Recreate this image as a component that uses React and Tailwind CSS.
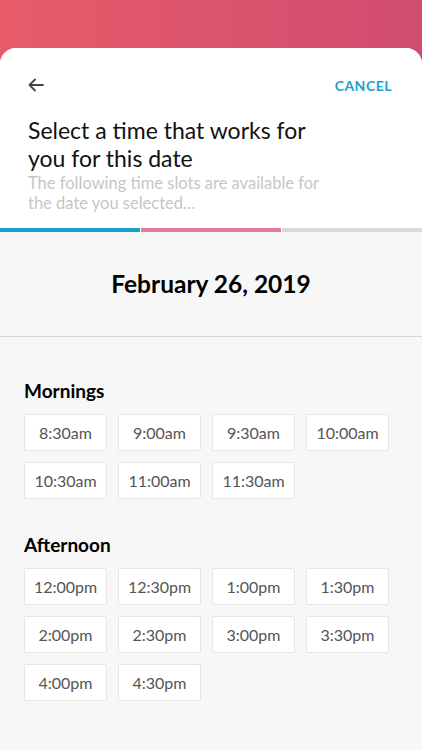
import React from "react";

const mornings = ["8:30am", "9:00am", "9:30am", "10:00am", "10:30am", "11:00am", "11:30am"];
const afternoon = ["12:00pm", "12:30pm", "1:00pm", "1:30pm", "2:00pm", "2:30pm", "3:00pm", "3:30pm", "4:00pm", "4:30pm"];

const SlotGroup = ({ title, slots, className }) => (
  <div className={className}>
    <h3 className="text-[19px] leading-[24px] font-bold text-black">{title}</h3>
    <div className="mt-[11px] grid grid-cols-[repeat(4,83px)] gap-x-[11px] gap-y-[11px]">
      {slots.map((s) => (
        <button
          key={s}
          className="h-[37px] bg-white border border-[#e6e6e6] rounded-[2px] text-[16px] text-[#555] flex items-center justify-center"
        >
          {s}
        </button>
      ))}
    </div>
  </div>
);

const App = () => {
  return (
    <div
      className="w-[422px] h-[750px] overflow-hidden bg-gradient-to-r from-[#e85c69] to-[#d04c70]"
      style={{ fontFamily: "Lato, 'Noto Sans', sans-serif" }}
    >
      <div className="mt-[48px] h-[702px] bg-[#f7f7f7] rounded-t-[16px] overflow-hidden">
        <div className="bg-white">
          <div className="pt-[26px] pl-[28px] pr-[30px] flex items-center justify-between h-[48px]">
            <svg width="16" height="14" viewBox="0 0 16 14" fill="none" stroke="#444" strokeWidth="1.8" strokeLinecap="round" strokeLinejoin="round">
              <path d="M15 7H1.5M7 1.5L1.5 7L7 12.5" />
            </svg>
            <span className="text-[14px] font-bold tracking-[0.5px] text-[#1a9fd2]">CANCEL</span>
          </div>
          <h1 className="mt-[20px] pl-[28px] pr-[90px] text-[23px] leading-[28px] text-[#111]">
            Select a time that works for you for this date
          </h1>
          <p className="mt-[1px] pl-[28px] pr-[92px] text-[16.5px] leading-[20px] text-[#c6c6c6]">
            The following time slots are available for the date you selected…
          </p>
          <div className="mt-[15px] flex gap-[1px] h-[4px]">
            <div className="w-[140px] bg-[#1b9fd1]" />
            <div className="w-[140px] bg-[#e57a96]" />
            <div className="flex-1 bg-[#d9d9d9]" />
          </div>
        </div>
        <div className="pt-[37px] pb-[37px] border-b border-[#d6d6d6] text-center">
          <h2 className="text-[24.5px] leading-[30px] font-bold text-black">February 26, 2019</h2>
        </div>
        <div className="px-[24px]">
          <SlotGroup title="Mornings" slots={mornings} className="pt-[42px]" />
          <SlotGroup title="Afternoon" slots={afternoon} className="mt-[34px]" />
        </div>
      </div>
    </div>
  );
};

export default App;
